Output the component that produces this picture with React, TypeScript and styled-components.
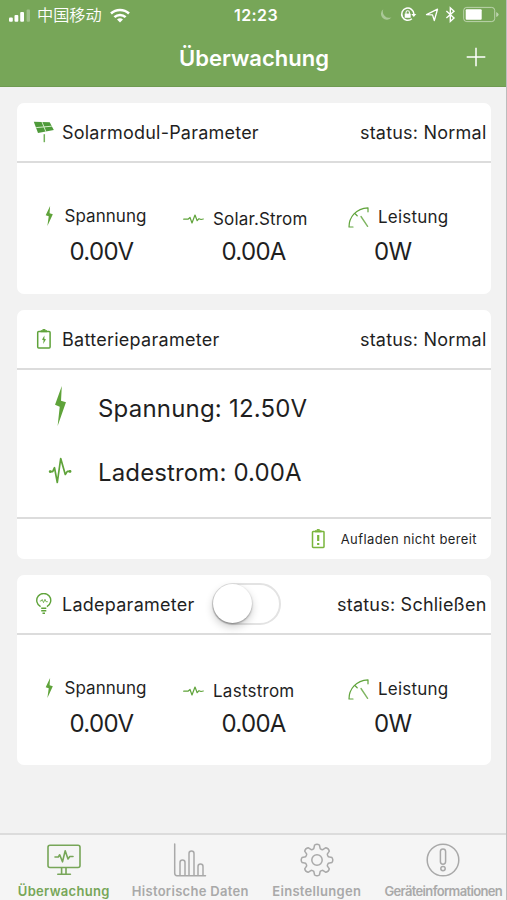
import React from "react";
import styled, { createGlobalStyle } from "styled-components";

const GREEN = "#77a658";
const LEAF = "#5fa33a";

const GlobalStyle = createGlobalStyle`
  * { box-sizing: border-box; }
  body { margin: 0; background: #f2f2f2; }
`;

const Screen = styled.div`
  display: flex;
  flex-direction: column;
  width: 507px;
  height: 900px;
  overflow: hidden;
  background: #f2f2f2;
  border-right: 1px solid #bcbcbc;
  color: #1f1f1f;
  font-family: Inter, "Noto Sans CJK SC", sans-serif;
  white-space: nowrap;
`;

const Header = styled.header`
  flex: none;
  height: 87px;
  background: ${GREEN};
  border-bottom: 1px solid #6f9b52;
  color: #fff;
`;

const StatusBar = styled.div`
  display: grid;
  grid-template-columns: 1fr auto 1fr;
  align-items: center;
  height: 30px;
  padding: 0 6px 0 8px;
`;

const StatusGroup = styled.div<{ $end?: boolean }>`
  display: flex;
  align-items: center;
  justify-content: ${(p) => (p.$end ? "flex-end" : "flex-start")};
`;

const Carrier = styled.span`
  margin: -2px 8px 0 6px;
  font: 350 16.2px/30px "Noto Sans CJK SC", sans-serif;
`;

const Clock = styled.span`
  padding-left: 4px;
  font-size: 16px;
  font-weight: 600;
  letter-spacing: 0.4px;
`;

const TitleBar = styled.div`
  display: grid;
  grid-template-columns: 1fr auto 1fr;
  align-items: center;
  height: 56px;
  padding-right: 20px;
  padding-left: 22px;
`;

const Title = styled.h1`
  grid-column: 2;
  margin: 0;
  font-size: 22px;
  font-weight: 600;
  line-height: 30px;
  letter-spacing: 0;
`;

const AddButton = styled.button`
  justify-self: end;
  display: flex;
  margin-top: -2px;
  padding: 0;
  border: 0;
  background: none;
  color: inherit;
`;

const Content = styled.main`
  flex: 1;
  display: flex;
  flex-direction: column;
  gap: 16px;
  padding: 16px 15px 0 17px;
`;

const Card = styled.section<{ $height: number }>`
  display: flex;
  flex-direction: column;
  height: ${(p) => p.$height}px;
  border-radius: 7px;
  background: #fff;
`;

const CardHeader = styled.div`
  display: flex;
  align-items: center;
  flex: none;
  height: 60px;
  padding: 1px 4.5px 0 16px;
  border-bottom: 2px solid #dcdcdc;
`;

const CardIcon = styled.span`
  display: flex;
  justify-content: center;
  width: 22px;
  margin: -1px 7px 0 0;
`;

const CardTitle = styled.h2<{ $spacing?: number }>`
  margin: 0;
  font-size: 18px;
  font-weight: 400;
  line-height: 24px;
  letter-spacing: ${(p) => p.$spacing ?? 0}px;
`;

const Status = styled.span`
  margin-left: auto;
  font-size: 18px;
  line-height: 24px;
  letter-spacing: 0.22px;
`;

const Toggle = styled.button`
  flex: none;
  width: 69px;
  height: 42px;
  margin: -1px 0 0 18px;
  padding: 0;
  border: 2px solid #e3e3e3;
  border-radius: 21px;
  background: #fff;
`;

const Knob = styled.span`
  display: block;
  width: 39px;
  height: 39px;
  margin: -1px 0 0 -1px;
  border-radius: 50%;
  background: #fff;
  box-shadow: 0 4px 8px rgba(0, 0, 0, 0.2), 0 1px 2px rgba(0, 0, 0, 0.35);
`;

const Metrics = styled.div`
  display: grid;
  grid-template-columns: 138px 165px 1fr;
  padding: 36px 0 0 28px;
`;

const Metric = styled.div`
  display: flex;
  flex-direction: column;
`;

const MetricLabel = styled.div<{ $shift: number; $gap: number }>`
  display: flex;
  align-items: center;
  gap: ${(p) => p.$gap}px;
  height: 34px;
  padding-top: ${(p) => p.$shift * 2}px;
  font-size: 17px;
  line-height: 24px;
`;

const Label = styled.span<{ $spacing: number }>`
  letter-spacing: ${(p) => p.$spacing}px;
`;

const MetricValue = styled.div<{ $indent: number }>`
  margin-top: 4px;
  padding-left: ${(p) => p.$indent}px;
  font-size: 24px;
  line-height: 30px;
  letter-spacing: -0.7px;
`;

const Readings = styled.div`
  flex: 1;
  display: flex;
  flex-direction: column;
  padding: 6px 0 0 27px;
`;

const Reading = styled.div<{ $spacing: number }>`
  display: flex;
  align-items: center;
  height: 64.5px;
  font-size: 24px;
  letter-spacing: ${(p) => p.$spacing}px;
`;

const ReadingIcon = styled.span`
  display: flex;
  justify-content: center;
  width: 32px;
  margin: -4px 22px 0 0;
`;

const CardFooter = styled.div`
  display: flex;
  align-items: center;
  justify-content: flex-end;
  gap: 15px;
  height: 42px;
  padding-right: 14px;
  border-top: 2px solid #dcdcdc;
  font-size: 13px;
  letter-spacing: 0.4px;
`;

const TabBar = styled.nav`
  flex: none;
  display: grid;
  grid-template-columns: repeat(4, 126.5px);
  height: 67px;
  padding-left: 0.5px;
  border-top: 2px solid #dcdcdc;
  background: #f5f5f5;
`;

const Tab = styled.a<{ $active?: boolean; $spacing: number }>`
  display: flex;
  flex-direction: column;
  align-items: center;
  gap: 4px;
  padding-top: 8px;
  color: ${(p) => (p.$active ? GREEN : "#a9a9a9")};
  font-size: 13px;
  font-weight: 600;
  line-height: 20px;
  letter-spacing: ${(p) => p.$spacing}px;
`;

const BOLT = "M6 0 L0.8 11.2 L4.4 12.4 L2.8 24 L9.2 9.8 L5.4 8.8 Z";

const Bolt = ({ w, h }: { w: number; h: number }) => (
  <svg width={w} height={h} viewBox="0 0 10 24" preserveAspectRatio="none">
    <path d={BOLT} fill={LEAF} />
  </svg>
);

const FlatPulse = () => (
  <svg width="21" height="10" viewBox="0 0 21 10" fill="none" stroke={LEAF} strokeWidth="1.2" strokeLinejoin="round" strokeLinecap="round">
    <path d="M.7 5.2H5L7 3.5 9 9 12 1 14.2 6.7 16 4.7 18 5.5 20.3 5" />
  </svg>
);

const TallPulse = () => (
  <svg width="24" height="28" viewBox="0 0 24 28" fill="none" stroke={LEAF} strokeWidth="1.7" strokeLinejoin="round" strokeLinecap="round">
    <path d="M2 14.6H4.7L6.5 10.7 9.3 25.5 12.7 1.5 17.3 17.5 19.3 14.4H22.3" />
    <circle cx="2.2" cy="14.6" r=".6" />
    <circle cx="22" cy="14.4" r=".6" />
  </svg>
);

const Gauge = () => (
  <svg width="21" height="21" viewBox="0 0 21 21" fill="none" stroke={LEAF} strokeWidth="1.2" strokeLinecap="round" strokeLinejoin="round">
    <path d="M5 20H1C1 10 8 1.5 20 .9V4.8M6.6 6.3 9.2 8.8" />
    <path d="M13 9.5 19.6 19.3" strokeWidth="1.4" opacity=".8" />
  </svg>
);

const SolarPanel = () => (
  <svg width="22" height="22" viewBox="0 0 22 22">
    <path d="M.8.8 16.7 1.2 20.8 9 5 12Z" fill="#4e9a3a" />
    <path d="M3.2 6.6 18.8 5.2M9 1 13 11" stroke="#d6eccb" strokeWidth="1" />
    <path d="M11.3 13.2V21.2" stroke="#72b15a" strokeWidth="1.5" />
  </svg>
);

const BatteryBolt = () => (
  <svg width="16" height="20" viewBox="0 0 16 20" fill="none" stroke={LEAF} strokeWidth="1.5">
    <rect x="1.7" y="2.5" width="12.4" height="16.5" rx="1" />
    <path d="M4.7 2.2H11" strokeWidth="2" />
    <path d="M6.5.8H9.4" />
    <path d="M8.4 6.5 6 10.8 7.6 11 7.2 15 10 10.2 8.4 10Z" fill={LEAF} stroke="none" />
  </svg>
);

const BatteryAlert = () => (
  <svg width="15" height="20" viewBox="0 0 15 20" fill="none" stroke="#7ab53c" strokeWidth="1.5">
    <rect x="1.5" y="2.5" width="11.5" height="16" rx=".7" />
    <path d="M4 2.3H10.5" strokeWidth="2" />
    <path d="M5.8.8H8.7" />
    <path d="M7.2 6V12" strokeWidth="2.2" />
    <path d="M7.2 14V16" strokeWidth="2.2" />
  </svg>
);

const Bulb = () => (
  <svg width="18" height="22" viewBox="0 0 18 22" fill="none" stroke={LEAF} strokeWidth="1.4">
    <path d="M5.6 13.7A7 7 0 1 1 11.9 13.7" />
    <path d="M4.8 8H6.2L7.2 6.5 8.5 9.6 10 6.3 11 8.7H12.8" strokeWidth=".8" />
    <path d="M6.2 15.2H11.3M6.2 17.7H11.3M7.5 20.2H10" />
  </svg>
);

const Signal = () => (
  <svg width="23" height="13" viewBox="0 0 23 13" fill="#fff">
    <rect x="1" y="8.5" width="3.8" height="4.2" rx="1" />
    <rect x="6.5" y="6" width="3.8" height="6.7" rx="1" />
    <rect x="12.2" y="3" width="3.8" height="9.7" rx="1" />
    <rect x="18.6" y=".4" width="3.4" height="12.3" rx="1" opacity=".3" />
  </svg>
);

const Wifi = () => (
  <svg width="20" height="15" viewBox="0 0 20 15" fill="none" stroke="#fff" strokeWidth="2.5">
    <path d="M1 5.5A13 13 0 0 1 19 5.5" />
    <path d="M4.4 9.2A8 8 0 0 1 15.6 9.2" />
    <path d="M7 11.5Q10 8.9 13 11.5L10 14.5Z" fill="#fff" stroke="none" />
  </svg>
);

const StatusIcons = () => (
  <svg width="121" height="18" viewBox="0 0 121 18" fill="none" stroke="#fff">
    <path d="M4.3 3.2A5.8 5.8 0 1 0 12.5 11.2 6.2 6.2 0 0 1 4.3 3.2Z" fill="#fff" stroke="none" opacity=".38" />
    <path d="M32.9 12.7A6.1 6.1 0 1 1 34.9 8" strokeWidth="1.5" />
    <path d="M32.3 8H37.3L34.8 11Z" fill="#fff" stroke="none" />
    <rect x="25.7" y="7.6" width="6" height="4.2" fill="#fff" stroke="none" />
    <path d="M27 8V6.5a1.7 1.7 0 0 1 3.4 0V8" strokeWidth="1.1" />
    <path d="M47.5 8.6 58.5 3.2 55.3 14.5 53.5 8.9Z" strokeWidth="1.3" strokeLinejoin="round" />
    <path d="M67.4 5 75 12 71.3 15.4V1.8L75 5.2 67.4 12" strokeWidth="1.4" />
    <rect x="84.7" y="1.4" width="31" height="14.2" rx="3" opacity=".5" />
    <rect x="86.7" y="3.3" width="16" height="10.4" rx="1" fill="#fff" stroke="none" />
    <path d="M117.2 6V11Q119.6 10 119.6 8.5T117.2 6Z" fill="#fff" stroke="none" opacity=".5" />
  </svg>
);

const MonitorIcon = () => (
  <svg width="36" height="34" viewBox="0 0 36 34" fill="none" stroke="currentColor" strokeWidth="1.6" strokeLinecap="round" strokeLinejoin="round">
    <rect x="2" y="2.3" width="32" height="22.2" rx="2" />
    <path d="M15.6 25V31M20 25V31M11.8 31.3H24.4M9 14H12.3L13.7 11.8 16.5 18.8 19.2 7.8 22 16 23.8 13.5H27" />
  </svg>
);

const ChartIcon = () => (
  <svg width="36" height="34" viewBox="0 0 36 34" fill="none" stroke="currentColor" strokeWidth="1.5" strokeLinecap="round">
    <path d="M2.7 1V30Q2.7 32.7 5 32.7H33.5M8 32V19.5Q8 17 10.5 17T13 19.5V32M17 32V10.5Q17 8 19.5 8T22 10.5V32M26 32V23.5Q26 21 28.5 21T31 23.5V32" />
  </svg>
);

const GearIcon = () => (
  <svg width="36" height="34" viewBox="-18 -17 36 34" fill="none" stroke="currentColor" strokeWidth="1.5" strokeLinejoin="round">
    <path d="M-3.2 -11.4 L-2.4 -15 Q0 -16.6 2.4 -15 L3.2 -11.4 Q4.4 -10.4 5.8 -10.3 L8.9 -12.3 Q11.7 -11.7 12.3 -8.9 L10.3 -5.8 Q10.4 -4.4 11.4 -3.2 L15 -2.4 Q16.6 0 15 2.4 L11.4 3.2 Q10.4 4.4 10.3 5.8 L12.3 8.9 Q11.7 11.7 8.9 12.3 L5.8 10.3 Q4.4 10.4 3.2 11.4 L2.4 15 Q0 16.6 -2.4 15 L-3.2 11.4 Q-4.4 10.4 -5.8 10.3 L-8.9 12.3 Q-11.7 11.7 -12.3 8.9 L-10.3 5.8 Q-10.4 4.4 -11.4 3.2 L-15 2.4 Q-16.6 0 -15 -2.4 L-11.4 -3.2 Q-10.4 -4.4 -10.3 -5.8 L-12.3 -8.9 Q-11.7 -11.7 -8.9 -12.3 L-5.8 -10.3 Q-4.4 -10.4 -3.2 -11.4Z" />
    <circle r="5.2" />
  </svg>
);

const InfoIcon = () => (
  <svg width="36" height="34" viewBox="0 0 36 34" fill="none" stroke="currentColor" strokeWidth="1.5">
    <circle cx="18" cy="17" r="15.8" />
    <rect x="15.4" y="6" width="5.2" height="15.2" rx="2.6" />
    <circle cx="18" cy="25.6" r="2.2" />
  </svg>
);

const MetricRow = ({ current, spacing }: { current: string; spacing: number }) => (
  <Metrics>
    <Metric>
      <MetricLabel $shift={0} $gap={11}>
        <Bolt w={8.5} h={20} />
        <Label $spacing={0.05}>Spannung</Label>
      </MetricLabel>
      <MetricValue $indent={24.5}>0.00V</MetricValue>
    </Metric>
    <Metric>
      <MetricLabel $shift={3} $gap={9}>
        <FlatPulse />
        <Label $spacing={spacing}>{current}</Label>
      </MetricLabel>
      <MetricValue $indent={38.5}>0.00A</MetricValue>
    </Metric>
    <Metric>
      <MetricLabel $shift={1} $gap={9}>
        <Gauge />
        <Label $spacing={0.2}>Leistung</Label>
      </MetricLabel>
      <MetricValue $indent={26}>0W</MetricValue>
    </Metric>
  </Metrics>
);

export default function App() {
  return (
    <>
      <GlobalStyle />
      <Screen>
        <Header>
          <StatusBar>
            <StatusGroup>
              <Signal />
              <Carrier>中国移动</Carrier>
              <Wifi />
            </StatusGroup>
            <Clock>12:23</Clock>
            <StatusGroup $end>
              <StatusIcons />
            </StatusGroup>
          </StatusBar>
          <TitleBar>
            <Title>Überwachung</Title>
            <AddButton aria-label="Hinzufügen">
              <svg width="20" height="20" viewBox="0 0 20 20" stroke="#fff" strokeWidth="1.5">
                <path d="M10 .7V19.3M.7 10H19.3" />
              </svg>
            </AddButton>
          </TitleBar>
        </Header>
        <Content>
          <Card $height={191}>
            <CardHeader>
              <CardIcon><SolarPanel /></CardIcon>
              <CardTitle $spacing={0.22}>Solarmodul-Parameter</CardTitle>
              <Status>status: Normal</Status>
            </CardHeader>
            <MetricRow current="Solar.Strom" spacing={0.17} />
          </Card>
          <Card $height={249}>
            <CardHeader>
              <CardIcon><BatteryBolt /></CardIcon>
              <CardTitle $spacing={0.27}>Batterieparameter</CardTitle>
              <Status>status: Normal</Status>
            </CardHeader>
            <Readings>
              <Reading $spacing={0.2}>
                <ReadingIcon><Bolt w={13} h={40} /></ReadingIcon>
                Spannung: 12.50V
              </Reading>
              <Reading $spacing={0.13}>
                <ReadingIcon><TallPulse /></ReadingIcon>
                Ladestrom: 0.00A
              </Reading>
            </Readings>
            <CardFooter>
              <BatteryAlert />
              Aufladen nicht bereit
            </CardFooter>
          </Card>
          <Card $height={190}>
            <CardHeader>
              <CardIcon><Bulb /></CardIcon>
              <CardTitle $spacing={0.25}>Ladeparameter</CardTitle>
              <Toggle role="switch" aria-checked={false} aria-label="Last">
                <Knob />
              </Toggle>
              <Status>status: Schließen</Status>
            </CardHeader>
            <MetricRow current="Laststrom" spacing={0.25} />
          </Card>
        </Content>
        <TabBar>
          <Tab $active $spacing={0.3}><MonitorIcon />Überwachung</Tab>
          <Tab $spacing={0.3}><ChartIcon />Historische Daten</Tab>
          <Tab $spacing={0.3}><GearIcon />Einstellungen</Tab>
          <Tab $spacing={-0.65}><InfoIcon />Geräteinformationen</Tab>
        </TabBar>
      </Screen>
    </>
  );
}
